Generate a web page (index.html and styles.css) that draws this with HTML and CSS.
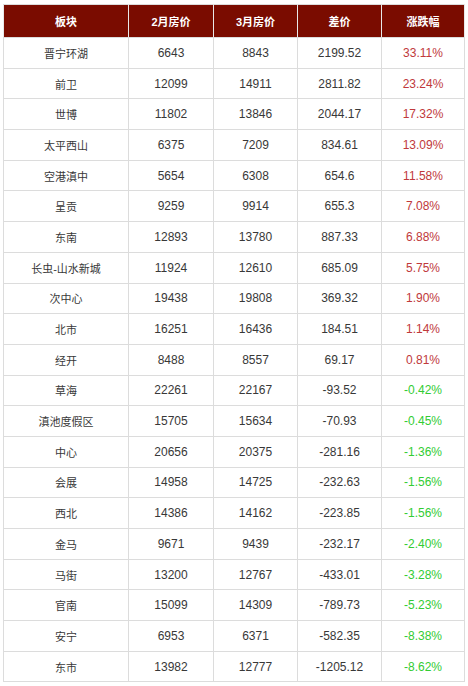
FILE: index.html
```html
<!DOCTYPE html>
<html>
<head>
<meta charset="utf-8">
<link rel="stylesheet" href="styles.css">
</head>
<body>
<table class="price-table">
  <colgroup>
    <col class="c1"><col class="c2"><col class="c3"><col class="c4"><col class="c5">
  </colgroup>
  <thead>
    <tr><th>板块</th><th>2月房价</th><th>3月房价</th><th>差价</th><th>涨跌幅</th></tr>
  </thead>
  <tbody>
    <tr><td class="name">晋宁环湖</td><td>6643</td><td>8843</td><td>2199.52</td><td class="up">33.11%</td></tr>
    <tr><td class="name">前卫</td><td>12099</td><td>14911</td><td>2811.82</td><td class="up">23.24%</td></tr>
    <tr><td class="name">世博</td><td>11802</td><td>13846</td><td>2044.17</td><td class="up">17.32%</td></tr>
    <tr><td class="name">太平西山</td><td>6375</td><td>7209</td><td>834.61</td><td class="up">13.09%</td></tr>
    <tr><td class="name">空港滇中</td><td>5654</td><td>6308</td><td>654.6</td><td class="up">11.58%</td></tr>
    <tr><td class="name">呈贡</td><td>9259</td><td>9914</td><td>655.3</td><td class="up">7.08%</td></tr>
    <tr><td class="name">东南</td><td>12893</td><td>13780</td><td>887.33</td><td class="up">6.88%</td></tr>
    <tr><td class="name">长虫-山水新城</td><td>11924</td><td>12610</td><td>685.09</td><td class="up">5.75%</td></tr>
    <tr><td class="name">次中心</td><td>19438</td><td>19808</td><td>369.32</td><td class="up">1.90%</td></tr>
    <tr><td class="name">北市</td><td>16251</td><td>16436</td><td>184.51</td><td class="up">1.14%</td></tr>
    <tr><td class="name">经开</td><td>8488</td><td>8557</td><td>69.17</td><td class="up">0.81%</td></tr>
    <tr><td class="name">草海</td><td>22261</td><td>22167</td><td>-93.52</td><td class="down">-0.42%</td></tr>
    <tr><td class="name">滇池度假区</td><td>15705</td><td>15634</td><td>-70.93</td><td class="down">-0.45%</td></tr>
    <tr><td class="name">中心</td><td>20656</td><td>20375</td><td>-281.16</td><td class="down">-1.36%</td></tr>
    <tr><td class="name">会展</td><td>14958</td><td>14725</td><td>-232.63</td><td class="down">-1.56%</td></tr>
    <tr><td class="name">西北</td><td>14386</td><td>14162</td><td>-223.85</td><td class="down">-1.56%</td></tr>
    <tr><td class="name">金马</td><td>9671</td><td>9439</td><td>-232.17</td><td class="down">-2.40%</td></tr>
    <tr><td class="name">马街</td><td>13200</td><td>12767</td><td>-433.01</td><td class="down">-3.28%</td></tr>
    <tr><td class="name">官南</td><td>15099</td><td>14309</td><td>-789.73</td><td class="down">-5.23%</td></tr>
    <tr><td class="name">安宁</td><td>6953</td><td>6371</td><td>-582.35</td><td class="down">-8.38%</td></tr>
    <tr><td class="name">东市</td><td>13982</td><td>12777</td><td>-1205.12</td><td class="down">-8.62%</td></tr>
  </tbody>
</table>
</body>
</html>
```
FILE: styles.css
```css
html, body {
  margin: 0;
  padding: 0;
  background: #ffffff;
}
body {
  padding: 4px 0 0 3px;
  font-family: "Liberation Sans", "Noto Sans CJK SC", sans-serif;
}
.price-table {
  border-collapse: collapse;
  width: 461px;
  table-layout: fixed;
  font-size: 12px;
  color: #383838;
}
.c1 { width: 125px; }
.c2 { width: 85px; }
.c3 { width: 84px; }
.c4 { width: 84px; }
.c5 { width: 83px; }
.price-table th,
.price-table td {
  border: 1px solid #dcdcdc;
  text-align: center;
  padding: 0;
}
.price-table th {
  background: #7a0c00;
  color: #ffffff;
  font-weight: bold;
  font-size: 11px;
  height: 32px;
  border-color: #dcdcdc #e8e8e8;
}
.price-table td {
  height: 29.7px;
}
.price-table td.name { font-size: 11px; }
.price-table td.up { color: #c0393b; }
.price-table td.down { color: #33cc33; }
```
